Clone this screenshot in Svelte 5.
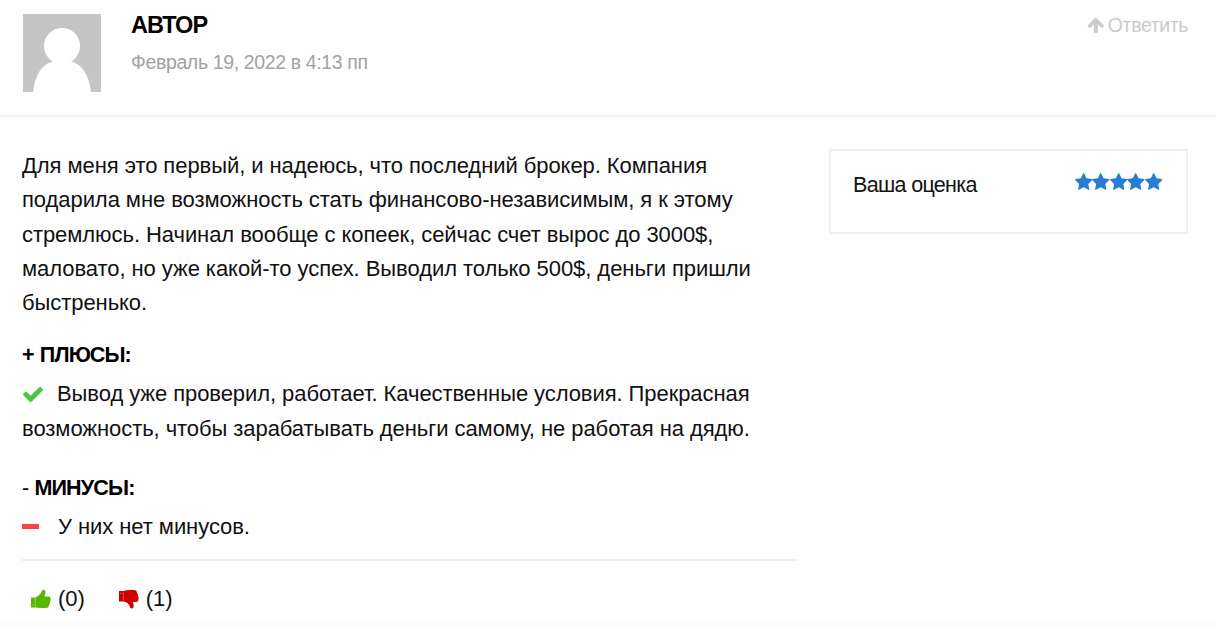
<script lang="ts">
  const rating = 5;
  const likes = 0;
  const dislikes = 1;

  const review = [
    "Для меня это первый, и надеюсь, что последний брокер. Компания",
    "подарила мне возможность стать финансово-независимым, я к этому",
    "стремлюсь. Начинал вообще с копеек, сейчас счет вырос до 3000$,",
    "маловато, но уже какой-то успех. Выводил только 500$, деньги пришли",
    "быстренько.",
  ];
</script>

<article>
  <header>
    <svg class="avatar" viewBox="0 0 78 78">
      <rect width="78" height="78" fill="#c5c5c5" />
      <circle cx="39" cy="32" r="18" fill="#fff" />
      <path d="M10 78C12 61 19 50 30 47.500Q32 46 30 43H48Q46 46 48 47.500C59 50 66 61 68 78Z" fill="#fff" />
    </svg>
    <div class="author">
      <h4><span>АВТОР</span></h4>
      <time><span>Февраль 19, 2022 в 4:13 пп</span></time>
    </div>
    <a class="reply" href="#reply">
      <svg viewBox="53 117 1622 1547" preserveAspectRatio="none"><path d="M1675 971q0 51-37 90l-75 75q-38 38-91 38-54 0-90-38l-294-293v704q0 52-37.500 84.500t-90.500 32.500h-128q-53 0-90.500-32.500t-37.500-84.500v-704l-294 293q-36 38-90 38t-90-38l-75-75q-38-38-38-90 0-53 38-91l651-651q35-37 90-37 54 0 91 37l651 651q37 39 37 91z" /></svg>
      <span>Ответить</span>
    </a>
  </header>

  <div class="content">
    <section class="review">
      <p class="text">
        {#each review as line}
          <span class="line">{line}</span>
        {/each}
      </p>

      <h5 class="pros-title"><span>+ ПЛЮСЫ:</span></h5>
      <p class="pros">
        <span class="line first">
          <svg class="check" viewBox="121 334 1550 1188" preserveAspectRatio="none"><path d="M1671 566q0 40-28 68l-724 724-136 136q-28 28-68 28t-68-28l-136-136-362-362q-28-28-28-68t28-68l136-136q28-28 68-28t68 28l294 295 656-657q28-28 68-28t68 28l136 136q28 28 28 68z" /></svg>
          <span>Вывод уже проверил, работает. Качественные условия. Прекрасная</span>
        </span>
        <span class="line">возможность, чтобы зарабатывать деньги самому, не работая на дядю.</span>
      </p>

      <h5 class="cons-title"><span><span class="dash">-</span> МИНУСЫ:</span></h5>
      <p class="cons">
        <i class="minus"></i>
        <span>У них нет минусов.</span>
      </p>

      <footer>
        <button class="like">
          <svg viewBox="0 0 21 20"><path d="M1 8.500H5.500L6 8C9 7 11 4.500 12 1.500C12.500 0 15.500.5 15.500 3C15.500 5 14.500 6 14.500 7.500H18.500Q20.800 7.500 20.500 10Q21 12 20 13Q20 15 19 16Q19 19 16 19H12Q8 18.500 5.500 18.500H1Z" /><path class="mark" d="M5.300 9v9M2 16h1.500" /></svg>
          <span>({likes})</span>
        </button>
        <button class="dislike">
          <svg viewBox="0 0 21 20"><path d="M1 2H5.500Q8 1.200 12 1H16Q19 1 19 4Q20 5 20 7Q21 8 20.500 10Q20.800 12.500 18.500 13H15C15.500 15 16.500 18 14.500 19.500Q12.500 20 12 18C11 15 9 13 6 12.500H1Z" /><path class="mark" d="M5.300 2.500v9M2 4.500h1.500" /></svg>
          <span>({dislikes})</span>
        </button>
      </footer>
    </section>

    <aside>
      <span class="label">Ваша оценка</span>
      <div class="stars">
        {#each Array(rating) as _}
          <svg viewBox="64 32 1664 1588" preserveAspectRatio="none"><path d="M1728 647q0 22-26 48l-363 354 86 500q1 7 1 20 0 21-10.500 35.500t-30.500 14.500q-19 0-40-12l-449-236-449 236q-22 12-40 12-21 0-31.500-14.500t-10.500-35.500q0-6 2-20l86-500-364-354q-25-27-25-48 0-37 56-46l502-73 225-455q19-41 49-41t49 41l225 455 502 73q56 9 56 46z" /></svg>
        {/each}
      </div>
    </aside>
  </div>
</article>

<style>
  :global(body) {
    background: #fefefe;
  }

  article {
    box-sizing: border-box;
    height: 627px;
    border-bottom: 9px solid #fcfcfc;
    color: #111;
    font-family: "Liberation Sans", Arial, sans-serif;
    font-size: 22px;
    line-height: 34.3px;
    letter-spacing: -0.065px;
    white-space: nowrap;
    overflow: hidden;
  }

  header {
    box-sizing: border-box;
    display: flex;
    align-items: flex-start;
    height: 117px;
    padding: 14px 28px 0 23px;
    border-bottom: 2px solid #f0f0f0;
  }

  .avatar {
    width: 78px;
    height: 78px;
  }

  .author {
    margin-left: 30px;
  }

  h4,
  h5,
  p {
    margin: 0;
  }

  h4 {
    margin-top: -4px;
    color: #000;
    font-size: 23.500px;
    line-height: 30px;
    letter-spacing: -0.9px;
  }

  time {
    display: block;
    margin-top: 7px;
    color: #a2a2a2;
    font-size: 19.500px;
    line-height: 30px;
    letter-spacing: -0.37px;
  }

  .reply {
    display: flex;
    align-items: center;
    gap: 4px;
    margin: -5px 0 0 auto;
    color: #ccc;
    font-size: 19.500px;
    line-height: 32px;
    letter-spacing: -0.4px;
    text-decoration: none;
  }

  .reply svg {
    width: 17px;
    height: 16px;
    fill: #ccc;
  }

  .content {
    display: flex;
    align-items: flex-start;
    justify-content: space-between;
    padding: 32px 28px 0 22px;
  }

  .review {
    width: 776px;
  }

  .line {
    display: block;
    width: fit-content;
  }

  h5 {
    color: #000;
    font-size: 21.500px;
    line-height: 34px;
    letter-spacing: -0.85px;
    word-spacing: 1px;
  }

  .pros-title {
    margin-top: 18px;
  }

  .pros {
    margin-top: 5px;
  }

  .first {
    display: flex;
    align-items: center;
    letter-spacing: -0.075px;
  }

  .check {
    width: 20px;
    height: 15px;
    margin: 0 14px 0 1px;
    fill: #4ec545;
  }

  .cons-title {
    margin-top: 25px;
  }

  .dash {
    font-weight: normal;
  }

  .cons {
    display: flex;
    align-items: center;
    margin-top: 5px;
  }

  .minus {
    width: 17px;
    height: 5px;
    margin: -2px 19px 0 0;
    background: #f94444;
  }

  footer {
    display: flex;
    gap: 33px;
    margin-top: 15px;
    padding: 21px 0 0 8px;
    border-top: 2px solid #eee;
  }

  button {
    display: flex;
    align-items: center;
    gap: 7px;
    padding: 0;
    border: 0;
    background: none;
    color: inherit;
    font: inherit;
    letter-spacing: inherit;
  }

  button svg {
    width: 21px;
    height: 20px;
    margin-top: -2px;
  }

  .like {
    fill: #55b800;
  }

  .dislike {
    fill: #cd0000;
  }

  .mark {
    fill: none;
    stroke: #fff;
    stroke-opacity: 0.4;
    stroke-width: 0.8;
  }

  aside {
    box-sizing: border-box;
    display: flex;
    align-items: flex-start;
    justify-content: space-between;
    width: 359px;
    height: 85px;
    padding: 17px 24px 0 22px;
    border: 2px solid #f0f0f0;
    font-size: 21.500px;
    letter-spacing: -0.67px;
  }

  .stars {
    display: flex;
    padding-top: 5px;
  }

  .stars svg {
    width: 17.400px;
    height: 17px;
    fill: #287dd0;
  }
</style>
